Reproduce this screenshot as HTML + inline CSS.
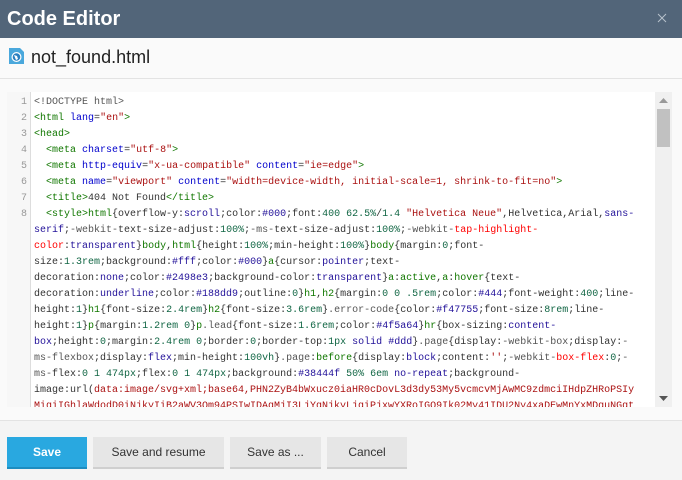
<!DOCTYPE html>
<html><head><style>
*{margin:0;padding:0;box-sizing:border-box}
body{width:682px;height:480px;overflow:hidden;background:#fafafa;font-family:"Liberation Sans",sans-serif;position:relative}
.hdr{position:absolute;left:0;top:0;width:682px;height:38px;background:#526579;color:#fff;font-size:20px;font-weight:bold;padding:8px 0 0 7px}
.x{position:absolute;right:14px;top:12px;width:12px;height:12px}
.title{position:absolute;left:0;top:38px;width:682px;height:41px;border-bottom:1px solid #e3e3e3;background:#fafafa}
.title span{position:absolute;left:31px;top:9px;font-size:18px;color:#222}
.ed{position:absolute;left:7px;top:92px;width:665px;height:315px;background:#fff;overflow:hidden}
.gut{position:absolute;left:0;top:0;width:24px;height:315px;background:#f7f7f7;border-right:1px solid #ddd}
.ln{position:absolute;left:0;width:20px;text-align:right;font:10px/16px "Liberation Mono",monospace;color:#999}
pre{position:absolute;left:27px;top:3px;font:10px/16px "Liberation Mono",monospace;color:#333}
.t{color:#170}.a{color:#00c}.s{color:#a11}.n{color:#164}.k{color:#219}.m{color:#555}.e{color:#f00}
.sb{position:absolute;right:0;top:0;width:17px;height:315px;background:#f0f0f0}
.th{position:absolute;left:2px;top:17px;width:13px;height:38px;background:#c1c1c1}
.foot{position:absolute;left:0;top:420px;width:682px;height:60px;background:#f4f4f4;border-top:1px solid #e3e3e3}
.btn{position:absolute;top:16px;height:32px;background:#e6e6e6;border-bottom:2px solid #cfcfcf;font-size:12px;color:#333;text-align:center;line-height:31px}
</style></head><body>
<div class="hdr">Code Editor
<svg class="x" viewBox="0 0 12 12"><path d="M2 2L10 10M10 2L2 10" stroke="#b8c2cc" stroke-width="1"/></svg></div>
<div class="title">
<svg style="position:absolute;left:8px;top:9px" width="17" height="18" viewBox="0 0 17 18"><path d="M1 1h11l4 4v12H1z" fill="#4aa8dc"/><circle cx="8.5" cy="10" r="5" fill="#fff"/><circle cx="8.5" cy="10" r="3.8" fill="#2a7fc0"/><path d="M6 8l3 1 1 3-2 1z" fill="#fff"/></svg>
<span>not_found.html</span></div>
<div class="ed">
<div class="gut">
<div class="ln" style="top:3px">1</div><div class="ln" style="top:19px">2</div><div class="ln" style="top:35px">3</div><div class="ln" style="top:51px">4</div><div class="ln" style="top:67px">5</div><div class="ln" style="top:83px">6</div><div class="ln" style="top:99px">7</div><div class="ln" style="top:115px">8</div>
</div>
<pre><span class="m">&lt;!DOCTYPE html&gt;</span>
<span class="t">&lt;html</span> <span class="a">lang</span>=<span class="s">"en"</span><span class="t">&gt;</span>
<span class="t">&lt;head&gt;</span>
  <span class="t">&lt;meta</span> <span class="a">charset</span>=<span class="s">"utf-8"</span><span class="t">&gt;</span>
  <span class="t">&lt;meta</span> <span class="a">http-equiv</span>=<span class="s">"x-ua-compatible"</span> <span class="a">content</span>=<span class="s">"ie=edge"</span><span class="t">&gt;</span>
  <span class="t">&lt;meta</span> <span class="a">name</span>=<span class="s">"viewport"</span> <span class="a">content</span>=<span class="s">"width=device-width, initial-scale=1, shrink-to-fit=no"</span><span class="t">&gt;</span>
  <span class="t">&lt;title&gt;</span>404 Not Found<span class="t">&lt;/title&gt;</span>
  <span class="t">&lt;style&gt;html</span>{overflow-y:<span class="k">scroll</span>;color:<span class="k">#000</span>;font:<span class="n">400 62.5%</span>/<span class="n">1.4</span> <span class="s">"Helvetica Neue"</span>,Helvetica,Arial,<span class="k">sans-</span>
<span class="k">serif</span>;<span class="m">-webkit-</span>text-size-adjust:<span class="n">100%</span>;<span class="m">-ms-</span>text-size-adjust:<span class="n">100%</span>;<span class="m">-webkit-</span><span class="e">tap-highlight-</span>
<span class="e">color</span>:<span class="k">transparent</span>}<span class="t">body</span>,<span class="t">html</span>{height:<span class="n">100%</span>;min-height:<span class="n">100%</span>}<span class="t">body</span>{margin:<span class="n">0</span>;font-
size:<span class="n">1.3rem</span>;background:<span class="k">#fff</span>;color:<span class="k">#000</span>}<span class="t">a</span>{cursor:<span class="k">pointer</span>;text-
decoration:<span class="k">none</span>;color:<span class="k">#2498e3</span>;background-color:<span class="k">transparent</span>}<span class="t">a</span>:<span class="t">active</span>,<span class="t">a</span>:<span class="t">hover</span>{text-
decoration:<span class="k">underline</span>;color:<span class="k">#188dd9</span>;outline:<span class="n">0</span>}<span class="t">h1</span>,<span class="t">h2</span>{margin:<span class="n">0 0 .5rem</span>;color:<span class="k">#444</span>;font-weight:<span class="n">400</span>;line-
height:<span class="n">1</span>}<span class="t">h1</span>{font-size:<span class="n">2.4rem</span>}<span class="t">h2</span>{font-size:<span class="n">3.6rem</span>}<span class="m">.error-code</span>{color:<span class="k">#f47755</span>;font-size:<span class="n">8rem</span>;line-
height:<span class="n">1</span>}<span class="t">p</span>{margin:<span class="n">1.2rem 0</span>}<span class="t">p</span><span class="m">.lead</span>{font-size:<span class="n">1.6rem</span>;color:<span class="k">#4f5a64</span>}<span class="t">hr</span>{box-sizing:<span class="k">content-</span>
<span class="k">box</span>;height:<span class="n">0</span>;margin:<span class="n">2.4rem 0</span>;border:<span class="n">0</span>;border-top:<span class="n">1px</span> <span class="k">solid</span> <span class="k">#ddd</span>}<span class="m">.page</span>{display:<span class="m">-webkit-box</span>;display:<span class="m">-</span>
<span class="m">ms-flexbox</span>;display:<span class="k">flex</span>;min-height:<span class="n">100vh</span>}<span class="m">.page</span>:<span class="t">before</span>{display:<span class="k">block</span>;content:<span class="s">''</span>;<span class="m">-webkit-</span><span class="e">box-flex</span>:<span class="n">0</span>;<span class="m">-</span>
<span class="m">ms-</span>flex:<span class="n">0 1 474px</span>;flex:<span class="n">0 1 474px</span>;background:<span class="k">#38444f</span> <span class="n">50% 6em</span> <span class="k">no-repeat</span>;background-
image:url(<span class="s">data:image/svg+xml;base64,PHN2ZyB4bWxucz0iaHR0cDovL3d3dy53My5vcmcvMjAwMC9zdmciIHdpZHRoPSIy</span>
<span class="s">MigiIGhlaWdodD0iNjkyIiB2aWV3Qm94PSIwIDAgMjI3LjYgNjkyLjgiPjxwYXRoIGQ9Ik02My41IDU2Ny4xaDEwMnYxMDguNGgt</span></pre>
<div class="sb"><svg style="position:absolute;left:4px;top:6px" width="9" height="5"><path d="M0 5L4.5 0 9 5z" fill="#999"/></svg><div class="th"></div>
<svg style="position:absolute;left:4px;top:304px" width="9" height="5"><path d="M0 0L4.5 5 9 0z" fill="#555"/></svg></div>
</div>
<div class="foot">
<div class="btn" style="left:7px;width:80px;background:#29a8e0;border-bottom-color:#1d8dc0;color:#fff;font-weight:bold">Save</div>
<div class="btn" style="left:93px;width:131px">Save and resume</div>
<div class="btn" style="left:230px;width:91px">Save as ...</div>
<div class="btn" style="left:327px;width:80px">Cancel</div>
</div>
</body></html>
